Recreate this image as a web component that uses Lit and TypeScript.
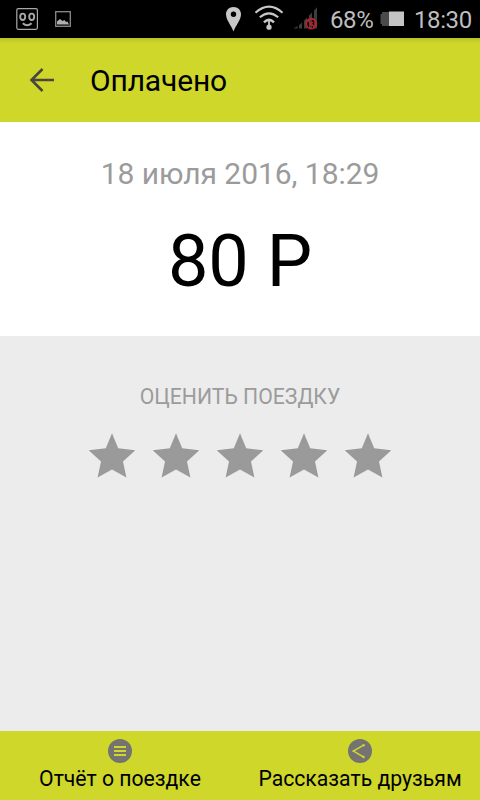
import { LitElement, html, css, svg } from "lit";
import { customElement } from "lit/decorators.js";

const star = svg`<polygon points="24,0.3 30.2,15.3 47.3,17.3 35,28.5 38.4,44.4 24,36.6 9.6,44.4 13,28.5 0.7,17.3 17.8,15.3" fill="#9a9a9a"/>`;

@customElement("status-bar")
class StatusBar extends LitElement {
  static styles = css`
    :host { display: flex; height: 38px; background: #000; color: #bebebe; font: 24px/38px Roboto, sans-serif; letter-spacing: -0.4px; }
    .icons { flex: none; width: 330px; height: 38px; }
    .level { width: 43px; white-space: nowrap; }
    .battery { width: 41px; height: 38px; }
    .clock { white-space: nowrap; }
    .level, .clock { padding-top: 1px; height: 37px; box-sizing: border-box; }
  `;
  render() {
    return html`
      <svg class="icons" viewBox="0 0 330 38">
        <rect x="16.8" y="8.7" width="20.6" height="20.6" rx="1.5" fill="none" stroke="#a8a8a8" stroke-width="1.2"/>
        <g fill="none" stroke="#a8a8a8" stroke-width="1.9">
          <ellipse cx="22.7" cy="16.8" rx="2.5" ry="3.2"/>
          <ellipse cx="31.7" cy="16.8" rx="2.5" ry="3.2"/>
          <path d="M22.8 23.2Q27.2 27.4 31.6 23.2"/>
        </g>
        <rect x="55.7" y="11.7" width="14.6" height="14.6" fill="none" stroke="#8c8c8c" stroke-width="1.3"/>
        <path d="M57 24.5V21.5L60 19L62.5 21L64.5 20L66 22L67.5 21.5L69 24.5Z" fill="#b0b0b0"/>
        <path fill-rule="evenodd" d="M233.5 7C229 7 226 10.2 226 14.3C226 20 231 25 233.5 31.5C236 25 241 20 241 14.3C241 10.2 238 7 233.5 7ZM233.5 11.5A2.7 2.7 0 1 1 233.5 16.9A2.7 2.7 0 1 1 233.5 11.5Z" fill="#c8c8c8"/>
        <g fill="none" stroke="#c8c8c8" stroke-width="2.1">
          <path d="M255.5 12.7Q269 .7 282.5 12.7"/>
          <path d="M259.8 17.3Q269 9.3 278.2 17.3"/>
          <path d="M264 22.3Q269 17.5 274 22.3" stroke-width="2.5"/>
          <path d="M269 20V27" stroke-width="1.8"/>
        </g>
        <circle cx="269" cy="27.2" r="2.6" fill="#c8c8c8"/>
        <path d="M293.5 28.5L297.5 26V28.5ZM299 25.2L302 22.5V28.5H299ZM304 20.5L307 17.5V28.5H304ZM309 15.5L312 12.5V28.5H309ZM314 10.5L317 7.3V28.5H314Z" fill="#3d3d3d"/>
        <g fill="none" stroke="#b9222e">
          <circle cx="311.2" cy="23.7" r="4.9" stroke-width="1.9"/>
          <path d="M308 20.5L314.5 27" stroke-width="1.7"/>
          <path d="M309.3 25.2L313.2 22" stroke-width="1.3"/>
        </g>
      </svg>
      <span class="level">68%</span>
      <svg class="battery" viewBox="0 0 41 38">
        <path d="M9 12H16V26H9V24H7.5V14H9Z" fill="#4a4a4a"/>
        <rect x="16" y="11.5" width="15" height="14.5" fill="#c4c4c4"/>
      </svg>
      <span class="clock">18:30</span>
    `;
  }
}

@customElement("app-root")
class AppRoot extends LitElement {
  static styles = css`
    :host { display: flex; flex-direction: column; width: 480px; height: 800px; overflow: hidden; background: #ececec; font-family: Roboto, sans-serif; color: #000; }
    .bar { height: 84px; box-sizing: border-box; display: flex; align-items: center; padding-left: 29px; gap: 35px; background: linear-gradient(#b7c127, #ced72a 5px, #ced72a); }
    .back { width: 26px; height: 26px; }
    .title { font-size: 30px; line-height: 36px; font-weight: 400; margin: 0; padding-top: 2px; letter-spacing: -0.15px; white-space: nowrap; }
    .summary { height: 214px; box-sizing: border-box; padding-top: 34px; background: #fff; text-align: center; white-space: nowrap; }
    .date { font-size: 30px; line-height: 36px; letter-spacing: -0.05px; color: #9b9b9b; }
    .amount { font-size: 72px; line-height: 84px; margin-top: 28px; }
    .rating { flex: 1; padding-top: 48px; text-align: center; }
    .label { font-size: 21.2px; line-height: 26px; color: #9b9b9b; white-space: nowrap; }
    .stars { display: flex; justify-content: center; gap: 16px; margin-top: 23px; }
    .star { width: 48px; height: 45px; }
    .actions { height: 69px; display: flex; background: #ced72a; }
    .action { flex: 1; display: flex; flex-direction: column; align-items: center; padding-top: 8px; white-space: nowrap; font-size: 21.2px; line-height: 26px; }
    .glyph { width: 24px; height: 24px; margin-bottom: 3px; }
  `;
  render() {
    return html`
      <status-bar></status-bar>
      <header class="bar">
        <svg class="back" viewBox="0 0 26 26"><path d="M25 13H3M13.5 2L2.5 13L13.5 24" fill="none" stroke="#4b4540" stroke-width="2.6"/></svg>
        <h1 class="title">Оплачено</h1>
      </header>
      <section class="summary">
        <div class="date">18 июля 2016, 18:29</div>
        <div class="amount">80 Р</div>
      </section>
      <section class="rating">
        <div class="label">ОЦЕНИТЬ ПОЕЗДКУ</div>
        <div class="stars">
          ${[1, 2, 3, 4, 5].map(() => html`<svg class="star" viewBox="0 0 48 45">${star}</svg>`)}
        </div>
      </section>
      <footer class="actions">
        <div class="action">
          <svg class="glyph" viewBox="0 0 24 24"><circle cx="12" cy="12" r="12" fill="#757371"/><path d="M6 8H18M6 12H18M6 16H18" stroke="#ced72a" stroke-width="2"/></svg>
          <span>Отчёт о поездке</span>
        </div>
        <div class="action">
          <svg class="glyph" viewBox="0 0 24 24"><circle cx="12" cy="12" r="12" fill="#757371"/><path d="M15.5 6.2L5.5 12.1L15.5 18" fill="none" stroke="#ced72a" stroke-width="1.5"/><g fill="#ced72a"><circle cx="15.6" cy="6.2" r="1.2"/><circle cx="5.6" cy="12.1" r="1.1"/><circle cx="15.6" cy="18" r="1.2"/></g></svg>
          <span>Рассказать друзьям</span>
        </div>
      </footer>
    `;
  }
}
